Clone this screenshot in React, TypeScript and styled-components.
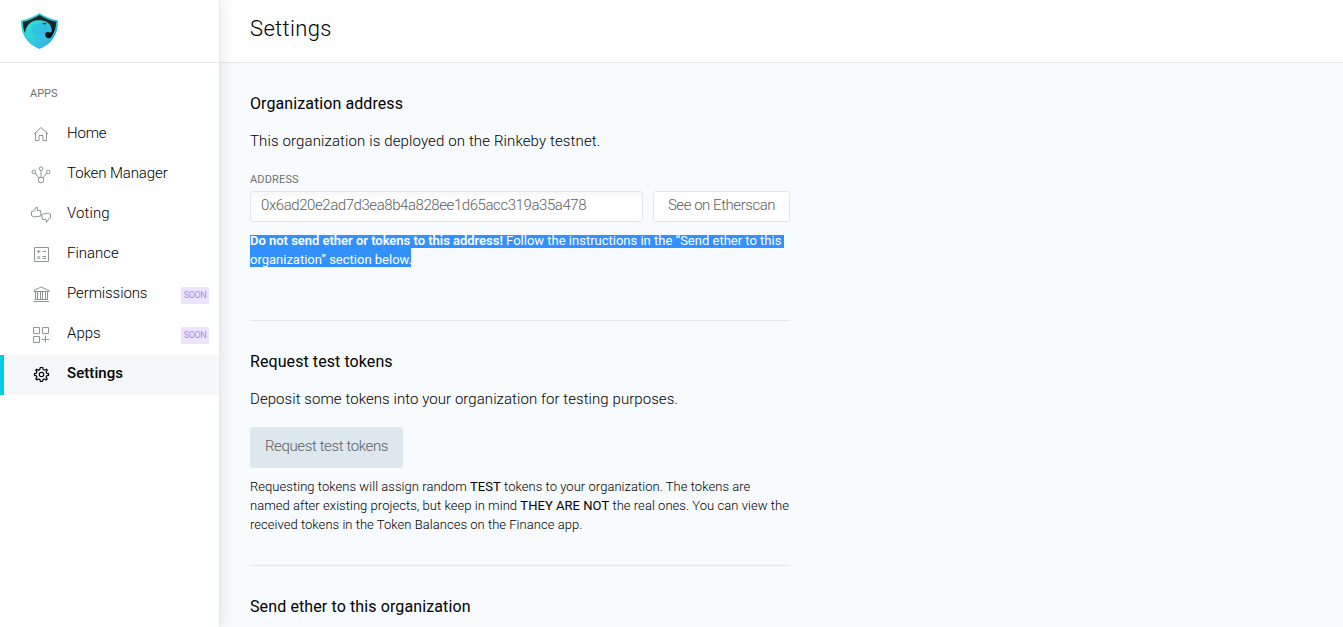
import React from 'react';
import styled, { createGlobalStyle } from 'styled-components';

const GlobalStyle = createGlobalStyle`
  * { box-sizing: border-box; }
  body {
    margin: 0;
    overflow: hidden;
    background: #f7fbfd;
    color: #000;
    font-family: Roboto, 'Liberation Sans', sans-serif;
    font-size: 15px;
    font-weight: 300;
  }
`;

const Layout = styled.div`
  display: flex;
  height: 627px;
  overflow: hidden;
`;

const Sidebar = styled.aside`
  position: relative;
  z-index: 1;
  flex: 0 0 220px;
  background: #fff;
  border-right: 1px solid #e8e8e8;
  box-shadow: 1px 0 15px rgba(0, 0, 0, 0.1);
`;

const LogoBar = styled.div`
  height: 63px;
  padding: 12px 0 0 20px;
  border-bottom: 1px solid #e8e8e8;
`;

const NavTitle = styled.h2`
  margin: 0;
  padding: 23px 0 0 30px;
  height: 52px;
  color: #707070;
  font-size: 11px;
  font-weight: 400;
  line-height: 16px;
  letter-spacing: -0.05px;
`;

const NavItem = styled.a<{ $active?: boolean }>`
  display: flex;
  align-items: center;
  height: 40px;
  padding: 0 10px 0 ${p => (p.$active ? 26 : 30)}px;
  border-left: ${p => (p.$active ? '4px solid #00cbe6' : '0')};
  background: ${p => (p.$active ? '#f5f8f9' : '#fff')};
  color: ${p => (p.$active ? '#000' : '#8d9497')};
  font-weight: ${p => (p.$active ? 500 : 300)};
`;

const NavLabel = styled.span<{ $spacing: number }>`
  flex: 1;
  margin-left: 15px;
  padding-bottom: 4px;
  color: #000;
  line-height: 20px;
  letter-spacing: ${p => p.$spacing}px;
  white-space: nowrap;
`;

const Soon = styled.span`
  width: 28px;
  height: 17px;
  border-radius: 2px;
  background: #ece3fd;
  color: #b08ee8;
  font-size: 9px;
  font-weight: 400;
  line-height: 16px;
  text-align: center;
  letter-spacing: -0.4px;
`;

const Main = styled.main`
  flex: 1;
  min-width: 0;
`;

const Header = styled.header`
  height: 63px;
  padding: 15px 0 0 30px;
  background: #fff;
  border-bottom: 1px solid #e8e8e8;
`;

const Title = styled.h1`
  margin: 0;
  font-size: 22px;
  font-weight: 300;
  line-height: 28px;
  letter-spacing: 0.35px;
`;

const Content = styled.div`
  width: 570px;
  padding-left: 30px;
`;

const Section = styled.section<{ $height: number }>`
  height: ${p => p.$height}px;
  padding-top: 29px;
  border-bottom: 1px solid #e4e7e9;
`;

const SectionTitle = styled.h2<{ $spacing: number }>`
  margin: 0 0 13px;
  font-size: 16px;
  font-weight: 400;
  line-height: 24px;
  letter-spacing: ${p => p.$spacing}px;
`;

const Lead = styled.p<{ $spacing: number }>`
  margin: 0;
  line-height: 24px;
  letter-spacing: ${p => p.$spacing}px;
  white-space: nowrap;
`;

const FieldLabel = styled.div`
  margin-top: 19px;
  height: 19px;
  color: #707070;
  font-size: 11px;
  font-weight: 400;
  line-height: 16px;
  letter-spacing: 0.15px;
`;

const FieldRow = styled.div`
  display: flex;
  gap: 10px;
`;

const Field = styled.div`
  width: 393px;
  height: 31px;
  padding-left: 10px;
  border: 1px solid #e4e4e4;
  border-radius: 3px;
  background: #fff;
  box-shadow: inset 0 4px 4px rgba(0, 0, 0, 0.03);
  color: #606060;
  line-height: 27px;
  letter-spacing: -0.43px;
`;

const LinkButton = styled.button`
  width: 137px;
  height: 31px;
  padding: 0 0 2px;
  border: 1px solid #e4e4e4;
  border-radius: 3px;
  background: #fff;
  color: #606060;
  font: inherit;
  line-height: 27px;
  letter-spacing: -0.45px;
`;

const Selection = styled.div`
  display: flex;
  flex-direction: column;
  align-items: flex-start;
  margin-top: 13px;
  color: #fff;
  font-size: 13px;
  font-weight: 400;
  white-space: nowrap;
`;

const SelectedLine = styled.span<{ $width: number; $height: number; $line: number; $spacing: number }>`
  width: ${p => p.$width}px;
  height: ${p => p.$height}px;
  background: #3390ff;
  line-height: ${p => p.$line}px;
  letter-spacing: ${p => p.$spacing}px;

  strong { font-weight: 600; letter-spacing: -0.02px; }
`;

const RequestButton = styled.button`
  display: block;
  width: 153px;
  height: 41px;
  margin: 16px 0 9px;
  padding: 0 0 3px;
  border: 0;
  border-radius: 3px;
  background: #dce8ed;
  color: #606060;
  font: inherit;
  letter-spacing: -0.38px;
`;

const NoteLine = styled.div<{ $spacing: number }>`
  font-size: 13px;
  line-height: 19px;
  letter-spacing: ${p => p.$spacing}px;
  white-space: nowrap;

  strong { font-weight: 400; }
`;

const IconSvg = styled.svg`
  flex: none;
  margin-top: -2px;
`;

const Icon = ({ children }: { children: React.ReactNode }) => (
  <IconSvg width="22" height="22" viewBox="0 0 22 22" fill="none" stroke="currentColor" strokeWidth="1">
    {children}
  </IconSvg>
);

const Logo = () => (
  <svg width="40" height="38" viewBox="0 0 40 38">
    <defs>
      <linearGradient id="shield" x1="0" y1="0" x2="1" y2="1">
        <stop offset="0" stopColor="#2de0d8" />
        <stop offset="1" stopColor="#2ba5e8" />
      </linearGradient>
      <linearGradient id="eagle" x1="0" y1="0.3" x2="1" y2="1">
        <stop offset="0" stopColor="#2de2da" />
        <stop offset="1" stopColor="#37a7e6" />
      </linearGradient>
    </defs>
    <path d="M19.500 1C25 4.500 31 7 38 8.500C38.200 22 32.500 31.500 19.500 37C6.500 31.500 .8 22 1 8.500C8 7 14 4.500 19.500 1Z" fill="url(#shield)" />
    <path d="M19.500 3C25 6.500 30 8.500 36.200 9.800C36 14.500 35 19 32.500 23L5.500 22C3.800 18.500 2.800 14 2.800 9.800C9 8.500 14 6.500 19.500 3Z" fill="#1f2526" />
    <path d="M5 21C6 14 10 8.800 17 8.300C24 7.800 29 10 30.800 14.500C32 17.500 32.500 20 30.500 20.500L33 23C30 29 26 33 19.500 36C12.500 33 7.500 28.500 5 21Z" fill="url(#eagle)" />
    <ellipse cx="19.500" cy="17.500" rx="8.500" ry="6" fill="#2aa9e0" opacity=".3" />
    <path d="M32 17.500C32.500 20 31 21.300 28.800 20.200C26.500 19.300 24.700 21 25.200 23.300C25.800 26.300 29.500 27.300 31.300 25L32.500 23L34.500 17.500Z" fill="#0a1416" />
    <path d="M22 11.200Q24.500 10.300 27 11.200L25.500 12.600Q23.500 12.800 22 11.200Z" fill="#123b46" />
  </svg>
);

const HomeIcon = () => (
  <Icon>
    <path d="M4 11L11 4.500L18 11M5.500 9.700V17.500H9V12.500H13V17.500H16.500V9.700" />
  </Icon>
);

const TokenIcon = () => (
  <Icon>
    <circle cx="11" cy="17" r="2.800" />
    <circle cx="11" cy="5.700" r="1.800" />
    <circle cx="3.800" cy="9" r="1.800" />
    <circle cx="18.200" cy="9" r="1.800" />
    <path d="M11 7.500V14.200M5.300 10L9 15M16.700 10L13 15" />
  </Icon>
);

const VotingIcon = () => (
  <Icon>
    <path d="M1.500 8.500L4 7.800L6.300 4L7.500 4.500L7 7.500L10.500 7.300L11 13L4 14L1.500 12.500Z" />
    <path d="M20.500 11L18.500 10L11.500 11.500L12.500 16.500L16 16.300L16.500 19.500L19 15.500L20.500 15Z" />
  </Icon>
);

const FinanceIcon = () => (
  <Icon>
    <path d="M4.500 4.500H18.500V18.500H4.500Z" />
    <path d="M7 8.500H10.500M8.700 6.800V10.200M12.500 8.500H16M12.500 13.500H16M12.500 15.500H16M7.200 13L10.200 16M10.200 13L7.200 16" />
  </Icon>
);

const PermissionsIcon = () => (
  <Icon>
    <path d="M4 7.500L11 4L19 7.500V8.500H4ZM3.500 18.500H19M4.500 16.500H18M5.500 8.500V16.500M7.500 8.500V16.500M10.500 8.500V16.500M12.500 8.500V16.500M15.500 8.500V16.500M17.500 8.500V16.500" />
  </Icon>
);

const AppsIcon = () => (
  <Icon>
    <path d="M3.500 4.500H9.500V10.500H3.500ZM12.500 4.500H18.500V10.500H12.500ZM3.500 13.500H9.500V19.500H3.500ZM15.500 12.500V19.500M12 16.500H19" />
  </Icon>
);

const SettingsIcon = () => (
  <Icon>
    <g transform="translate(11.500 11.500)" strokeWidth="1.200">
      <circle r="2.200" />
      <path d="M-1.200 -7H1.200L1.700 -5L3.200 -4.300L5 -5.300L5.800 -4.400L4.600 -2.700L5.200 -1.200L7 -.9V.9L5.200 1.200L4.600 2.700L5.700 4.400L4.600 5.500L2.900 4.500L1.500 5.100L1.100 7H-1.100L-1.500 5.100L-2.900 4.500L-4.600 5.500L-5.700 4.400L-4.600 2.700L-5.200 1.200L-7 .9V-.9L-5.200 -1.200L-4.600 -2.700L-5.700 -4.400L-4.700 -5.300L-3.200 -4.300L-1.700 -5Z" />
    </g>
  </Icon>
);

const navigation = [
  { label: 'Home', icon: HomeIcon, spacing: -0.2 },
  { label: 'Token Manager', icon: TokenIcon, spacing: -0.1 },
  { label: 'Voting', icon: VotingIcon, spacing: 0.1 },
  { label: 'Finance', icon: FinanceIcon, spacing: 0 },
  { label: 'Permissions', icon: PermissionsIcon, spacing: -0.1, soon: true },
  { label: 'Apps', icon: AppsIcon, spacing: 0, soon: true },
  { label: 'Settings', icon: SettingsIcon, spacing: 0.08, active: true },
];

export default function App() {
  return (
    <>
      <GlobalStyle />
      <Layout>
        <Sidebar>
          <LogoBar><Logo /></LogoBar>
          <NavTitle>APPS</NavTitle>
          {navigation.map(({ label, icon: ItemIcon, spacing, soon, active }) => (
            <NavItem key={label} $active={active}>
              <ItemIcon />
              <NavLabel $spacing={spacing}>{label}</NavLabel>
              {soon && <Soon>SOON</Soon>}
            </NavItem>
          ))}
        </Sidebar>
        <Main>
          <Header><Title>Settings</Title></Header>
          <Content>
            <Section $height={258}>
              <SectionTitle $spacing={0.08}>Organization address</SectionTitle>
              <Lead $spacing={0.125}>This organization is deployed on the Rinkeby testnet.</Lead>
              <FieldLabel>ADDRESS</FieldLabel>
              <FieldRow>
                <Field>0x6ad20e2ad7d3ea8b4a828ee1d65acc319a35a478</Field>
                <LinkButton>See on Etherscan</LinkButton>
              </FieldRow>
              <Selection>
                <SelectedLine $width={534} $height={13} $line={12} $spacing={0}>
                  <strong>Do not send ether or tokens to this address!</strong> Follow the instructions in the “Send ether to this
                </SelectedLine>
                <SelectedLine $width={161} $height={19} $line={24} $spacing={0}>organization” section below.</SelectedLine>
              </Selection>
            </Section>
            <Section $height={245}>
              <SectionTitle $spacing={0.08}>Request test tokens</SectionTitle>
              <Lead $spacing={0.07}>Deposit some tokens into your organization for testing purposes.</Lead>
              <RequestButton>Request test tokens</RequestButton>
              <NoteLine $spacing={0.045}>Requesting tokens will assign random <strong>TEST</strong> tokens to your organization. The tokens are</NoteLine>
              <NoteLine $spacing={0.043}>named after existing projects, but keep in mind <strong>THEY ARE NOT</strong> the real ones. You can view the</NoteLine>
              <NoteLine $spacing={0.035}>received tokens in the Token Balances on the Finance app.</NoteLine>
            </Section>
            <Section $height={245}>
              <SectionTitle $spacing={0.115}>Send ether to this organization</SectionTitle>
            </Section>
          </Content>
        </Main>
      </Layout>
    </>
  );
}
